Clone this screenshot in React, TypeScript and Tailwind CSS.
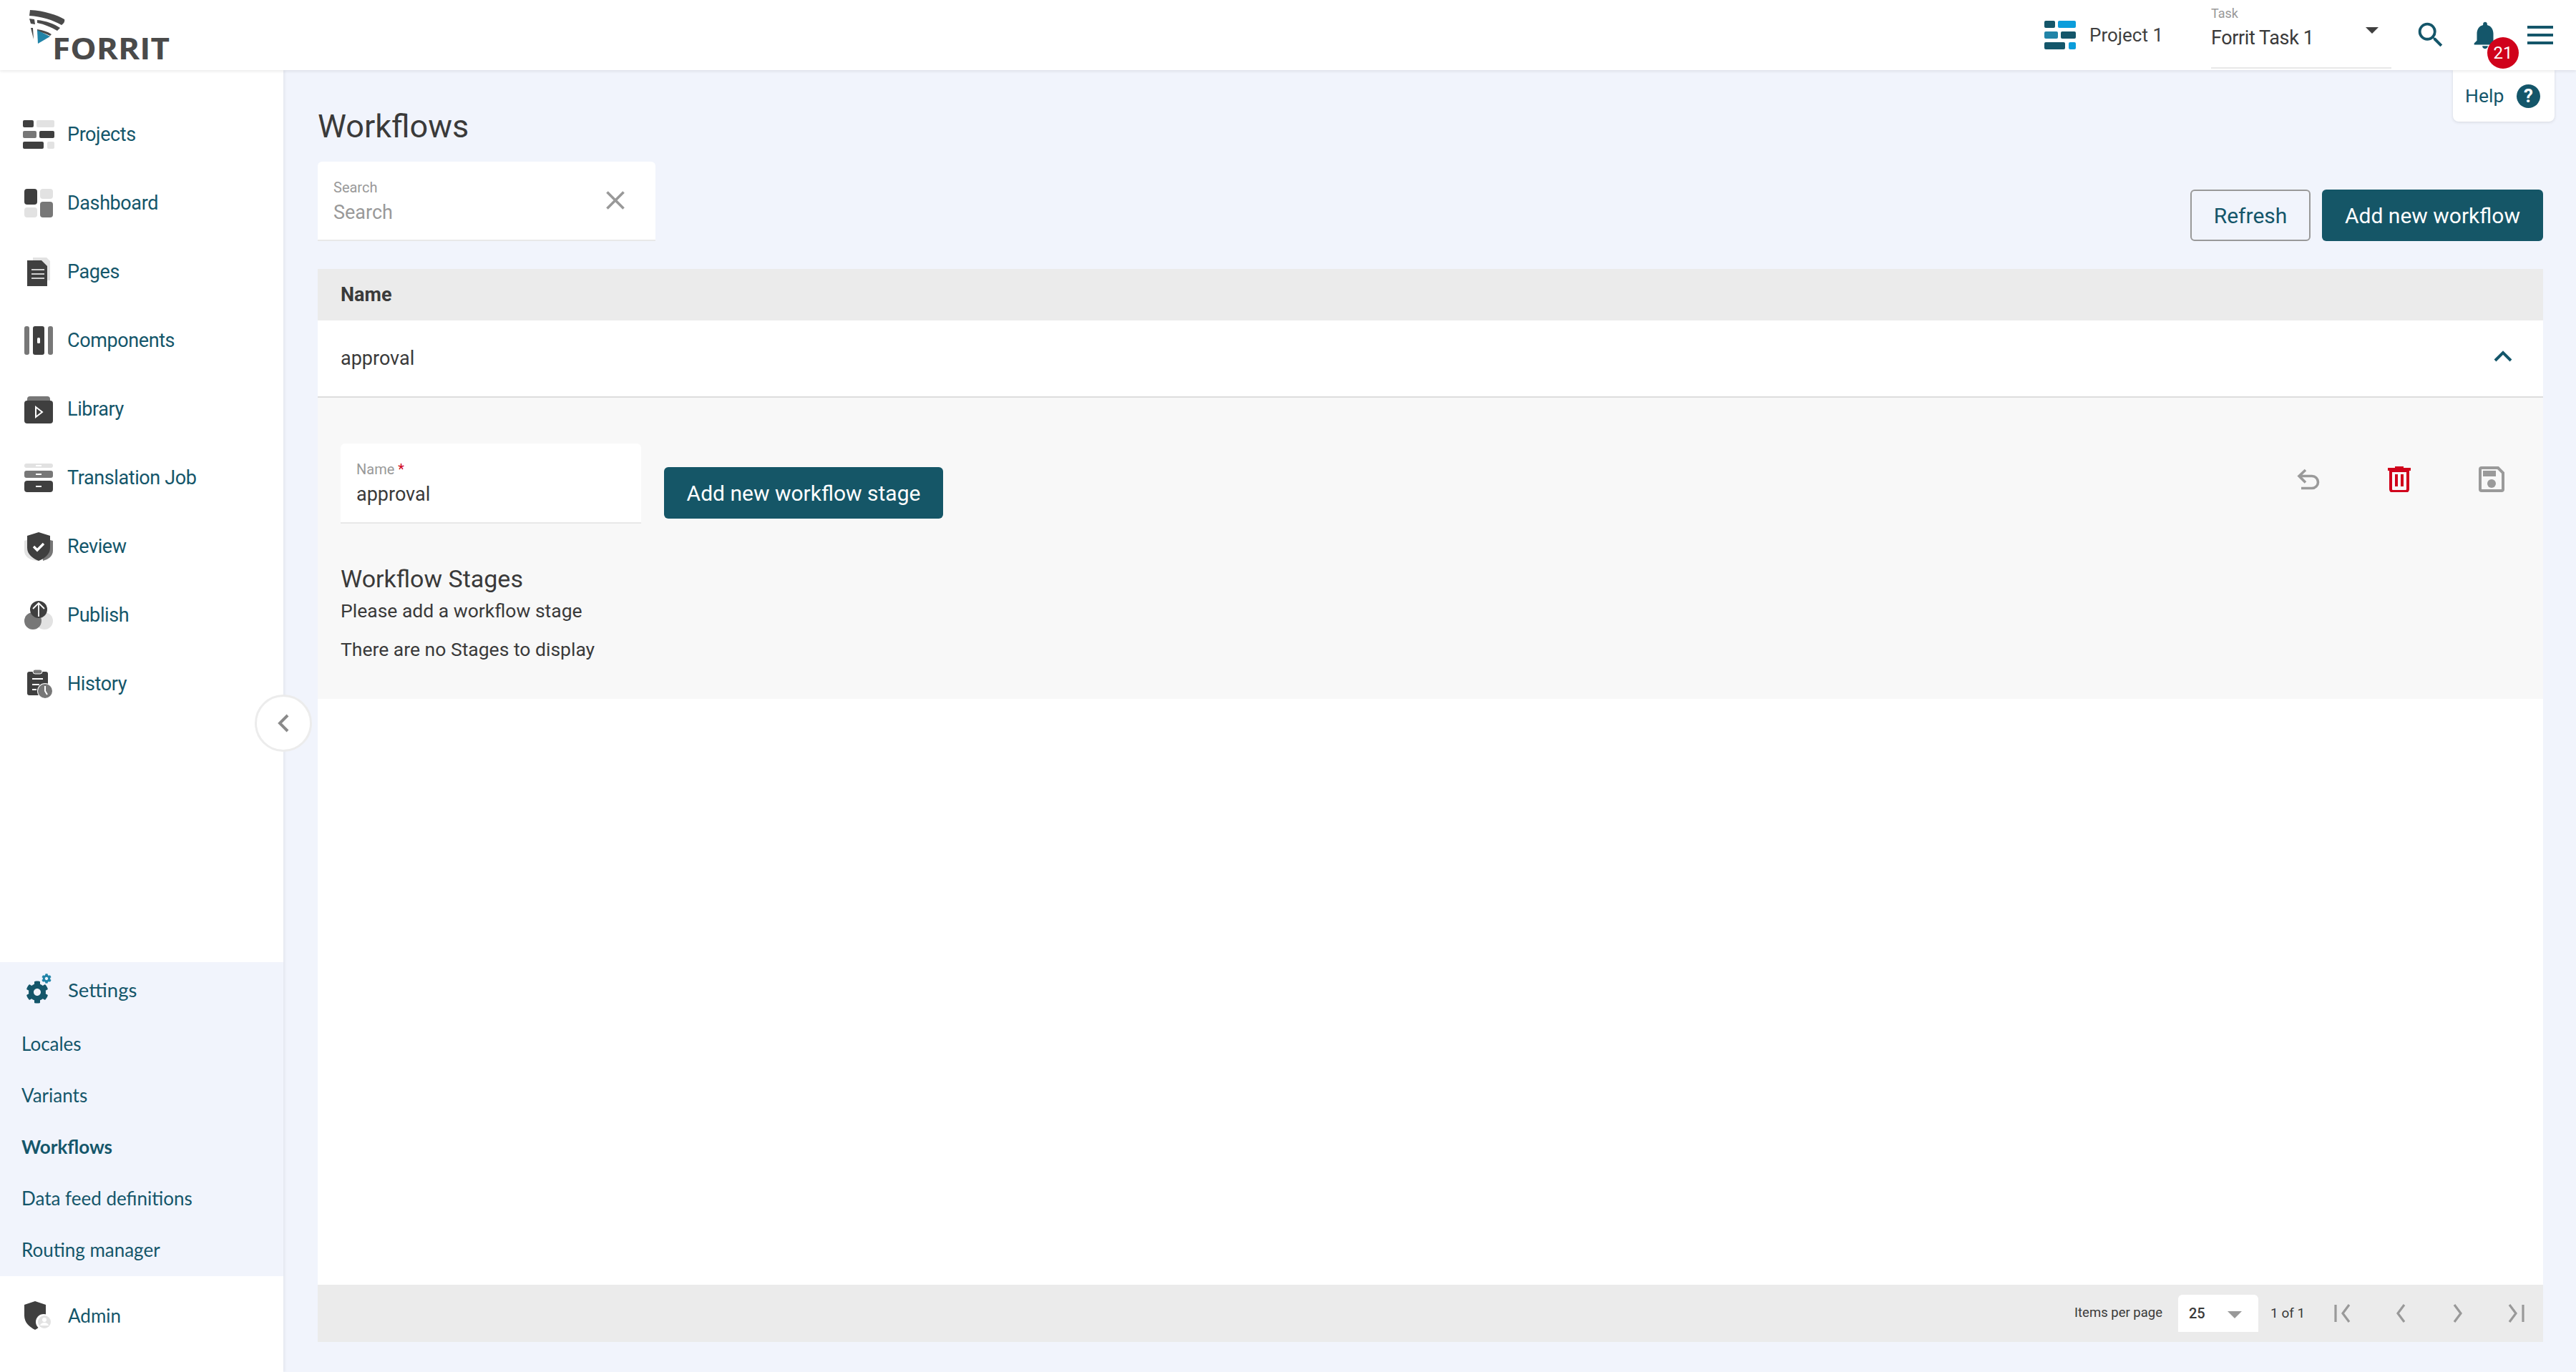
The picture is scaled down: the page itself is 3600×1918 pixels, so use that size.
import React from 'react';
import { MdNotifications, MdSearch, MdClose } from 'react-icons/md';
import { FaCog } from 'react-icons/fa';

const DARK = '#3f3f3f';
const MID = '#777777';
const LIGHT = '#e2e2e2';

const ProjectsIcon = ({ a = DARK, b = MID, c = LIGHT }: { a?: string; b?: string; c?: string }) => (
  <svg width="44" height="40" viewBox="0 0 44 40">
    <rect x="0" y="0" width="15" height="10" rx="2" fill={a} />
    <rect x="19" y="0" width="25" height="10" rx="2" fill={c} />
    <rect x="0" y="15" width="19" height="10" rx="2" fill={b} />
    <rect x="23" y="15" width="21" height="10" rx="2" fill={a} />
    <rect x="0" y="30" width="29" height="10" rx="2" fill={a} />
    <rect x="34" y="30" width="10" height="10" rx="2" fill={c} />
  </svg>
);

const DashboardIcon = () => (
  <svg width="40" height="40" viewBox="0 0 40 40">
    <rect x="0" y="0" width="18" height="22" rx="4" fill={DARK} />
    <rect x="22" y="0" width="18" height="14" rx="4" fill={LIGHT} />
    <rect x="0" y="26" width="18" height="14" rx="4" fill={LIGHT} />
    <rect x="22" y="18" width="18" height="22" rx="4" fill={MID} />
  </svg>
);

const PagesIcon = () => (
  <svg width="44" height="40" viewBox="0 0 44 40">
    <path d="M14 0h19l5 5v27H14z" fill={LIGHT} />
    <path d="M6 4h20l8 8v28H6z" fill={DARK} />
    <path d="M12 17h18M12 23h18M12 29h18" stroke="#fff" strokeWidth="1.6" />
  </svg>
);

const ComponentsIcon = () => (
  <svg width="40" height="40" viewBox="0 0 40 40">
    <rect x="0" y="0" width="7" height="40" rx="3" fill={MID} />
    <rect x="12" y="0" width="16" height="40" rx="3" fill={DARK} />
    <rect x="33" y="0" width="7" height="40" rx="3" fill={MID} />
    <rect x="18" y="16" width="4" height="8" rx="1.5" fill="#fff" />
  </svg>
);

const LibraryIcon = () => (
  <svg width="40" height="40" viewBox="0 0 40 40">
    <path d="M4 6a4 4 0 0 1 4-4h24a4 4 0 0 1 4 4v3H4z" fill={MID} />
    <rect x="0" y="8" width="40" height="32" rx="4" fill={DARK} />
    <path d="M16 17l9 7-9 7z" fill="none" stroke="#fff" strokeWidth="2" />
  </svg>
);

const TranslationIcon = () => (
  <svg width="40" height="40" viewBox="0 0 40 40">
    <rect x="0" y="0" width="40" height="6" rx="3" fill={LIGHT} />
    <rect x="16" y="2" width="8" height="2" fill="#fff" />
    <rect x="0" y="10" width="40" height="10" rx="3" fill={MID} />
    <rect x="16" y="14" width="8" height="2" fill="#fff" />
    <rect x="0" y="24" width="40" height="16" rx="4" fill={DARK} />
    <rect x="16" y="31" width="8" height="2" fill="#fff" />
  </svg>
);

const ReviewIcon = () => (
  <svg width="40" height="40" viewBox="0 0 40 40">
    <path d="M0 12v14c0 8 8 14 20 14V6z" fill={LIGHT} />
    <path d="M24 8l16 4v14c0 7-6 12-14 14z" fill={MID} />
    <path d="M20 0l16 5v17c0 9-8 15-16 18C12 37 4 31 4 22V5z" fill={DARK} />
    <path d="M13 20l5 5 9-9" fill="none" stroke="#fff" strokeWidth="3.4" />
  </svg>
);

const PublishIcon = () => (
  <svg width="40" height="40" viewBox="0 0 40 40">
    <circle cx="28" cy="28" r="12" fill={LIGHT} />
    <circle cx="12" cy="28" r="12" fill={MID} />
    <circle cx="20" cy="12" r="12" fill={DARK} />
    <path d="M20 22V3M12 11l8-8 8 8" fill="none" stroke="#fff" strokeWidth="1.8" />
  </svg>
);

const HistoryIcon = () => (
  <svg width="40" height="40" viewBox="0 0 40 40">
    <rect x="4" y="3" width="29" height="33" rx="3" fill={DARK} />
    <rect x="12" y="0" width="13" height="6" rx="3" fill={MID} stroke="#fff" strokeWidth="1" />
    <path d="M11 13h15M11 21h10M11 28h6" stroke="#fff" strokeWidth="2" />
    <circle cx="29" cy="30" r="11" fill="#fff" />
    <circle cx="29" cy="30" r="10" fill={MID} />
    <path d="M29 23v7l3 5" fill="none" stroke="#fff" strokeWidth="2" />
  </svg>
);

const AdminIcon = () => (
  <svg width="40" height="40" viewBox="0 0 40 40">
    <path d="M17 0l15 5v15c0 10-8 16-15 20C9 36 2 30 2 20V5z" fill={DARK} />
    <circle cx="29" cy="29" r="11" fill="#fff" />
    <circle cx="30" cy="29" r="9" fill={LIGHT} />
    <circle cx="30" cy="26" r="3" fill="#fff" />
    <path d="M24 34c1-3 3-4 6-4s5 1 6 4z" fill="#fff" />
  </svg>
);

const Logo = () => (
  <svg width="200" height="86" viewBox="0 0 200 86">
    <path d="M2 1c20 1 38 7 48 13 1 3-1 6-4 8C34 15 18 10 1 9z" fill="#4a4a4a" />
    <path d="M1 13l7 1 1 7-6-1z" fill="#4a4a4a" />
    <path d="M12 15c12 1 25 6 32 11l-4 4C32 25 22 21 12 19z" fill="#4a4a4a" />
    <path d="M3 26l3 0 1 16z" fill="#4a4a4a" />
    <path d="M12 28c8 1 14 3 20 7l-2 2c-6-3-12-5-18-6z" fill="#4a4a4a" />
    <path d="M12 29l18 9-17 10z" fill="#2184a8" />
    <text x="33" y="70" fontFamily="Open Sans, sans-serif" fontWeight="700" fontSize="41" fill="#4a4a4a" textLength="164" lengthAdjust="spacingAndGlyphs">
      FORRIT
    </text>
  </svg>
);

const navItems: { label: string; icon: React.ReactNode }[] = [
  { label: 'Projects', icon: <ProjectsIcon /> },
  { label: 'Dashboard', icon: <DashboardIcon /> },
  { label: 'Pages', icon: <PagesIcon /> },
  { label: 'Components', icon: <ComponentsIcon /> },
  { label: 'Library', icon: <LibraryIcon /> },
  { label: 'Translation Job', icon: <TranslationIcon /> },
  { label: 'Review', icon: <ReviewIcon /> },
  { label: 'Publish', icon: <PublishIcon /> },
  { label: 'History', icon: <HistoryIcon /> },
];

const settingsLinks = ['Locales', 'Variants', 'Workflows', 'Data feed definitions', 'Routing manager'];

const Sidebar = () => (
  <aside className="flex w-[396px] shrink-0 flex-col bg-white pt-[42px] shadow-[2px_0_4px_rgba(0,0,0,0.06)]">
    <nav className="flex flex-col">
      {navItems.map((item) => (
        <a key={item.label} className="flex h-[96px] items-center">
          <span className="flex w-[108px] items-center justify-center">{item.icon}</span>
          <span className="-ml-[14px] text-[27px] tracking-[-0.4px] text-[#14566a]">{item.label}</span>
        </a>
      ))}
    </nav>

    {/* Settings group */}
    <div className="mt-auto flex flex-col bg-[#f1f4fc] [font-family:Lato,sans-serif]">
      <div className="flex h-[79px] items-center pb-[2px]">
        <span className="relative ml-[36px] w-[59px]">
          <FaCog className="mt-[6px] text-[32px] text-[#14566a]" />
          <FaCog className="absolute left-[22px] -top-[4px] text-[14px] text-[#2184a8]" />
        </span>
        <span className="text-[27.5px] text-[#14566a]">Settings</span>
      </div>
      {settingsLinks.map((link) => (
        <a
          key={link}
          className={`flex h-[72px] items-center pb-[2px] pl-[30px] text-[26px] text-[#14566a] ${link === 'Workflows' ? 'font-bold' : ''}`}
        >
          {link}
        </a>
      ))}
    </div>

    <div className="mb-[24px] flex h-[110px] items-center pl-[32px] [font-family:Lato,sans-serif]">
      <span className="w-[63px]">
        <AdminIcon />
      </span>
      <span className="text-[26px] text-[#14566a]">Admin</span>
    </div>
  </aside>
);

const Header = () => (
  <header className="relative z-20 flex h-[98px] shrink-0 items-center bg-white pl-[40px] shadow-[0_2px_4px_rgba(0,0,0,0.08)]">
    <div className="mt-[13px]">
      <Logo />
    </div>
    <div className="ml-auto flex items-center">
      <ProjectsIcon a="#14566a" b="#2184a8" c="#0b9ddb" />
      <span className="ml-[19px] text-[26px] whitespace-nowrap text-[#3f3f3f]">Project 1</span>
      <div className="relative ml-[67px] flex h-[94px] w-[252px] flex-col border-b-2 border-[#e8e8e8]">
        <span className="mt-[6px] text-[18px] leading-[22px] text-[#999999]">Task</span>
        <span className="mt-[3px] text-[27px] leading-[40px] tracking-[-0.4px] text-[#3a3a3a]">Forrit Task 1</span>
        <span className="absolute right-[18px] top-[36px] h-0 w-0 border-x-[9px] border-t-[9px] border-x-transparent border-t-[#3f3f3f]" />
      </div>
      <MdSearch className="ml-[32px] text-[46px] text-[#14566a]" />
      <div className="relative ml-[30px] w-[46px]">
        <MdNotifications className="text-[46px] text-[#14566a]" />
        <span className="absolute left-[26px] top-[26px] flex h-[44px] w-[44px] items-center justify-center rounded-full bg-[#d0021b] text-[24px] text-white">
          21
        </span>
      </div>
      <div className="ml-[36px] mr-[32px] flex w-[36px] flex-col gap-[7px]">
        <span className="h-[4px] bg-[#14566a]" />
        <span className="h-[4px] bg-[#14566a]" />
        <span className="h-[4px] bg-[#14566a]" />
      </div>
    </div>
  </header>
);

const Toolbar = () => (
  <div className="mb-[39px] flex items-end justify-between">
    <div className="relative flex h-[111px] w-[472px] flex-col rounded-t-[6px] border-b-2 border-[#e8e8e8] bg-white pl-[22px]">
      <span className="mt-[24px] text-[20px] leading-[24px] text-[#999999]">Search</span>
      <span className="mt-[6px] text-[27px] leading-[34px] text-[#999999]">Search</span>
      <MdClose className="absolute right-[34px] top-[32px] text-[44px] text-[#999999]" />
    </div>
    <div className="flex gap-[16px]">
      <button className="h-[72px] w-[168px] rounded-[6px] border-2 border-[#999999] text-[30px] text-[#14566a]">
        Refresh
      </button>
      <button className="h-[72px] w-[309px] rounded-[6px] bg-[#155667] text-[30px] text-white">
        Add new workflow
      </button>
    </div>
  </div>
);

const PagerChevron = ({ d }: { d: string }) => (
  <svg width="28" height="28" viewBox="0 0 28 28" className="text-[#999999]">
    <path d={d} fill="none" stroke="currentColor" strokeWidth="3.2" />
  </svg>
);

const Footer = () => (
  <div className="flex h-[80px] shrink-0 items-center justify-end bg-[#ebebeb] pr-[25px] text-[#3a3a3a]">
    <span className="text-[18.5px] whitespace-nowrap">Items per page</span>
    <div className="relative ml-[22px] flex h-[52px] w-[112px] items-center rounded-t-[6px] bg-white pl-[15px]">
      <span className="text-[20px] font-medium">25</span>
      <span className="absolute right-[23px] top-[23px] h-0 w-0 border-x-[10px] border-t-[10px] border-x-transparent border-t-[#999999]" />
    </div>
    <span className="ml-[17px] w-[42px] text-[19px] whitespace-nowrap">1 of 1</span>
    <div className="ml-[46px] flex items-center gap-[52px]">
      <PagerChevron d="M3 2v24M22 2L13 14l9 12" />
      <PagerChevron d="M19 2L10 14l9 12" />
      <PagerChevron d="M9 2l9 12-9 12" />
      <PagerChevron d="M25 2v24M6 2l9 12-9 12" />
    </div>
  </div>
);

const DetailPanel = () => (
  <div className="flex h-[421px] shrink-0 flex-col bg-[#f8f8f8] px-[32px] text-[#3a3a3a]">
    <div className="mt-[64px] flex items-start">
      <div className="flex h-[112px] w-[420px] flex-col rounded-t-[6px] border-b-2 border-[#e8e8e8] bg-white pl-[22px]">
        <span className="mt-[24px] text-[20px] leading-[24px] text-[#999999]">
          Name <span className="text-[#d0021b]">*</span>
        </span>
        <span className="mt-[6px] text-[27px] leading-[34px]">approval</span>
      </div>
      <button className="ml-[32px] mt-[33px] h-[72px] w-[390px] rounded-[6px] bg-[#155667] text-[30px] text-white">
        Add new workflow stage
      </button>
      <div className="ml-auto mr-[22px] mt-[32px] flex items-center gap-[95px]">
        <svg width="32" height="30" viewBox="0 0 32 30">
          <path d="M12 2L3 10.500l9 9M3 10.500h18a8.500 8.500 0 0 1 0 17H6" fill="none" stroke="#9a9a9a" strokeWidth="3.600" />
        </svg>
        <svg width="32" height="36" viewBox="0 0 32 36">
          <path d="M10 0h12v2h10v4H0V2h10z" fill="#d0021b" />
          <path d="M4 6v26a3 3 0 0 0 3 3h18a3 3 0 0 0 3-3V6z" fill="none" stroke="#d0021b" strokeWidth="4" />
          <path d="M10 11h4v17h-4zM18 11h4v17h-4z" fill="#d0021b" />
        </svg>
        <svg width="36" height="36" viewBox="0 0 36 36">
          <path d="M2 4a2 2 0 0 1 2-2h23l7 7v23a2 2 0 0 1-2 2H4a2 2 0 0 1-2-2z" fill="none" stroke="#9a9a9a" strokeWidth="4" />
          <rect x="6" y="6" width="18" height="8" fill="#9a9a9a" />
          <circle cx="18" cy="24" r="6" fill="#9a9a9a" />
        </svg>
      </div>
    </div>
    <h2 className="mt-[57px] text-[34px] leading-[40px]">Workflow Stages</h2>
    <p className="mt-[8px] text-[26.500px] leading-[34px]">Please add a workflow stage</p>
    <p className="mt-[20px] text-[26.500px] leading-[34px]">There are no Stages to display</p>
  </div>
);

const App: React.FC = () => (
  <div className="relative flex h-[1918px] w-[3600px] flex-col overflow-hidden bg-[#f1f4fc] [font-family:Roboto,sans-serif]">
    <Header />
    <div className="flex min-h-0 flex-1">
      <Sidebar />
      <main className="flex min-w-0 flex-1 flex-col pl-[48px] pr-[46px] pt-[48px] pb-[42px]">
        <h1 className="mb-[18px] text-[45px] leading-[62px] text-[#3a3a3a]">Workflows</h1>
        <Toolbar />
        <div className="flex min-h-0 flex-1 flex-col bg-white">
          <div className="flex h-[72px] shrink-0 items-center bg-[#ebebeb] pl-[32px] text-[27px] font-bold text-[#3a3a3a]">
            Name
          </div>
          <div className="flex h-[108px] shrink-0 items-center justify-between border-b-2 border-[#dddddd] pl-[32px] pr-[43px] text-[27px] text-[#3a3a3a]">
            <span>approval</span>
            <svg width="26" height="16" viewBox="0 0 26 16" className="mb-[6px]">
              <path d="M2 14L13 3l11 11" fill="none" stroke="#14566a" strokeWidth="4" />
            </svg>
          </div>
          <DetailPanel />
          <div className="flex-1" />
          <Footer />
        </div>
      </main>
    </div>

    {/* Help tab hanging under the header */}
    <div className="absolute right-[30px] top-[98px] z-10 flex h-[72px] w-[142px] items-center justify-between rounded-b-[8px] bg-white pl-[17px] pr-[20px] shadow-[0_1px_4px_rgba(0,0,0,0.12)]">
      <span className="text-[26.500px] text-[#14566a]">Help</span>
      <span className="flex h-[33px] w-[33px] items-center justify-center rounded-full bg-[#14566a] text-[26px] font-bold text-white">
        ?
      </span>
    </div>

    {/* Sidebar collapse toggle */}
    <button className="absolute left-[356px] top-[971px] z-10 flex h-[80px] w-[80px] items-center justify-center rounded-full border-[3px] border-[#ececec] bg-white">
      <svg width="18" height="26" viewBox="0 0 18 26">
        <path d="M15 2L4 13l11 11" fill="none" stroke="#8a8a8a" strokeWidth="4" />
      </svg>
    </button>
  </div>
);

export default App;
